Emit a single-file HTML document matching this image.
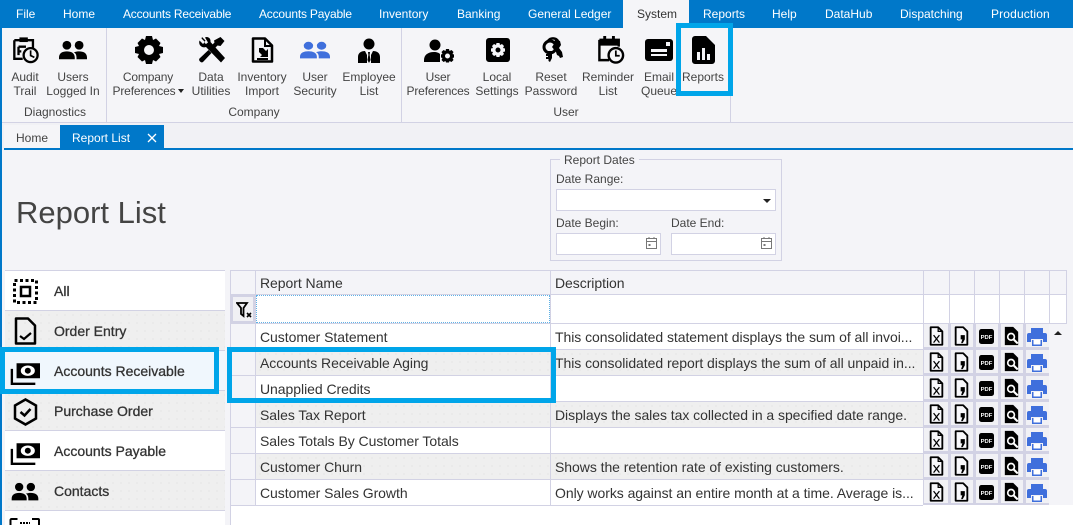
<!DOCTYPE html>
<html><head><meta charset="utf-8"><style>
html,body{margin:0;padding:0;width:1073px;height:525px;overflow:hidden;background:#f4f4f8;font:12px "Liberation Sans",sans-serif;color:#333}
.a,svg{position:absolute}
.a{white-space:nowrap}
.t{position:absolute;top:7px;color:#fff;line-height:14px;white-space:nowrap}
.r{position:absolute;text-align:center;line-height:14px;width:80px;color:#444;top:70px}
.g{position:absolute;text-align:center;width:100px;top:105px;line-height:14px;color:#444}
.b{position:absolute;background:#d2d2e4}
.si{position:absolute;left:5px;width:220px;height:39px;border-bottom:1px solid #d2d2e4}
.w{background:#fff}
.d{background-color:#efefef;background-image:radial-gradient(#dcdcdc .6px,transparent .8px);background-size:8px 8px}
.sl{position:absolute;left:54px;font-size:14px;line-height:18px;color:#333;-webkit-text-stroke:.3px #333;white-space:nowrap}
.row{position:absolute;left:256px;width:667px;height:25px;border-bottom:1px solid #d2d2e4}
.c{position:absolute;font-size:14px;line-height:18px;white-space:nowrap;color:#333;letter-spacing:-.05px}
.cy{position:absolute;border:5px solid #00a5e9;box-sizing:border-box}
.l{position:absolute;font-size:12px;line-height:14px;color:#444;white-space:nowrap}
.in{position:absolute;background:#fff;border:1px solid #d2d2e4;box-sizing:border-box}
</style></head><body>
<svg width="0" height="0" style="position:absolute">
<defs>
<symbol id="x" viewBox="0 0 18 24"><path d="M2 1.500h9l5 5v16H2z" fill="#f8f8fb" stroke="#000" stroke-width="2.200" stroke-linejoin="round"/><path d="M11 1.500v5h5" fill="none" stroke="#000" stroke-width="1.500"/><path d="M5.500 11l7 9M12.500 11l-7 9" stroke="#000" stroke-width="1.500"/></symbol>
<symbol id="w" viewBox="0 0 18 24"><path d="M2 1.500h9l5 5v16H2z" fill="#f8f8fb" stroke="#000" stroke-width="2.200" stroke-linejoin="round"/><path d="M8 11h5v5l-2.500 4.500h-2l1.500-4.500H8z" fill="#000"/></symbol>
<symbol id="p" viewBox="0 0 18 18"><rect width="18" height="18" y="0" rx="3" fill="#000"/><text x="9" y="12" font-size="7" font-weight="700" fill="#fff" text-anchor="middle" font-family="Liberation Sans">PDF</text></symbol>
<symbol id="q" viewBox="0 0 18 24"><path d="M1 1h10l6 6v16H1z" fill="#000"/><circle cx="8.500" cy="13" r="4" fill="#000" stroke="#fff" stroke-width="2"/><path d="M11.500 16l5 5" stroke="#fff" stroke-width="2.500"/></symbol>
<symbol id="pr" viewBox="0 0 20 20"><path d="M4 1h12v5H4z" fill="#3f6fdc"/><path d="M2 6h16a2 2 0 0 1 2 2v7h-4v-3H4v3H0V8a2 2 0 0 1 2-2z" fill="#3f6fdc"/><path d="M5 13h10v6H5z" fill="#3f6fdc"/><path d="M6.500 13h7v4.500h-7z" fill="#fff"/></symbol>
<symbol id="ppl" viewBox="0 0 32 24"><circle cx="9" cy="6" r="5"/><circle cx="23" cy="6" r="5"/><path d="M0 20c0-5 4-7 9-7s9 2 9 7v2H0zM20 13.300c1-.300 2-.300 3-.300 5 0 9 2 9 7v2H20v-2c0-3-1-5-3-6z"/></symbol>
<symbol id="mon" viewBox="0 0 32 24"><path d="M7 1h25v16H7z"/><ellipse cx="19" cy="9" rx="7.500" ry="5.500" fill="#fff"/><circle cx="19" cy="9" r="3.200"/><path d="M2 7v16h25" fill="none" stroke="#000" stroke-width="2.500"/></symbol>
</defs></svg>

<!-- top bar -->
<div class="a" style="left:0;top:0;width:1073px;height:28px;background:#0078c9"></div>
<div class="a" style="left:623px;top:0;width:66px;height:28px;background:#f5f5f8"></div>
<span class="t" style="left:16px">File</span><span class="t" style="left:63px">Home</span><span class="t" style="left:123px;letter-spacing:-.2px">Accounts Receivable</span><span class="t" style="left:259px;letter-spacing:-.2px">Accounts Payable</span><span class="t" style="left:379px">Inventory</span><span class="t" style="left:457px">Banking</span><span class="t" style="left:528px">General Ledger</span><span class="t" style="left:637px;color:#333">System</span><span class="t" style="left:703px">Reports</span><span class="t" style="left:772px">Help</span><span class="t" style="left:825px">DataHub</span><span class="t" style="left:900px">Dispatching</span><span class="t" style="left:991px;letter-spacing:.15px">Production</span>

<!-- ribbon -->
<div class="a" style="left:0;top:28px;width:2px;height:497px;background:#0078c9"></div>
<div class="a" style="left:2px;top:28px;width:1071px;height:94px;background:#f5f5f8"></div>
<div class="b" style="left:2px;top:122px;width:1071px;height:1px"></div>
<div class="b" style="left:106px;top:28px;width:1px;height:94px"></div>
<div class="b" style="left:401px;top:28px;width:1px;height:94px"></div>
<div class="b" style="left:730px;top:28px;width:1px;height:94px"></div>

<!-- ribbon icons -->
<svg style="left:12px;top:35px" width="27" height="29" viewBox="0 0 29 30"><path d="M2.500 5h20v10M2.500 5v20h9" fill="none" stroke="#000" stroke-width="2.500"/><path d="M8 2h9v5H8z" fill="#000"/><path d="M7 12h8M7 17h3M7 12v9" stroke="#000" stroke-width="2.500" fill="none"/><circle cx="20" cy="21" r="7.500" fill="#f5f5f8" stroke="#000" stroke-width="2.500"/><path d="M20 16v5.500l4 2" fill="none" stroke="#000" stroke-width="1.800"/></svg>
<svg style="left:58px;top:40px" width="30" height="21"><use href="#ppl" width="30" height="21"/></svg>
<svg style="left:135px;top:36px" width="28" height="28" viewBox="0 0 28 28"><path fill-rule="evenodd" d="M11 0h6l1 4 3-1.500 4.500 4.500L24 10l4 1v6l-4 1 1.500 3-4.500 4.500L18 24l-1 4h-6l-1-4-3 1.500L2.500 21 4 18l-4-1v-6l4-1-1.500-3L7 2.500 10 4zM14 9a5 5 0 1 0 0 10 5 5 0 0 0 0-10z"/></svg>
<svg style="left:198px;top:37px" width="27" height="26" viewBox="0 0 27 26"><path d="M4 0l3.500 3.500-1.500 2 2 1.500 2-1.500L7 .5c3-1.500 6 1 5.500 4.500L27 21l-4 4.500L8 10C4 11.500 0 8 1.500 3.500L5 7l2-2L3.500 1.500z"/><path d="M22.500 0l4 4-4 5-3-.5-4.500 4.500-3-3 4.500-4.500-.5-2z"/><path d="M10.500 13l3 3L5 25c-1.500 1.500-5-1.500-3.500-3.500z"/></svg>
<svg style="left:251px;top:37px" width="23" height="26" viewBox="0 0 23 26"><path d="M2 1.500h12l7 7v16H2z" fill="none" stroke="#000" stroke-width="2.500" stroke-linejoin="round"/><path d="M14 2v7h7" fill="none" stroke="#000" stroke-width="2"/><path d="M8 11h4l3 3 2-2v8H9l2-2-3-3zM6 21h11v2H6z" fill="#000"/></svg>
<svg style="left:300px;top:41px" width="30" height="19" fill="#3f6fdc" viewBox="0 0 32 24" preserveAspectRatio="none"><use href="#ppl" width="32" height="24"/></svg>
<svg style="left:358px;top:38px" width="22" height="25" viewBox="0 0 22 25"><circle cx="11" cy="6" r="5.500"/><path d="M0 25v-6c0-4 3-6 7-6l2 4v8zM22 25v-6c0-4-3-6-7-6l-2 4v8zM10 14h2l-.4 3 1 5-1.600 3-1.600-3 1-5z"/></svg>
<svg style="left:424px;top:39px" width="30" height="24" viewBox="0 0 30 24"><circle cx="11" cy="6" r="5.500"/><path d="M0 23v-2c0-5 4-8 10-8 3 0 5 1 6 2v8z"/><path fill-rule="evenodd" d="M22 10h3l.5 2 2-1 2 2-1 2 1.500.5v3l-1.500.5 1 2-2 2-2-1-.5 1.500h-3l-.5-1.500-2 1-2-2 1-2-1.500-.5v-3l1.500-.5-1-2 2-2 2 1zM23.500 14.500a2.500 2.500 0 1 0 0 5 2.500 2.500 0 0 0 0-5z"/></svg>
<svg style="left:486px;top:38px" width="24" height="24" viewBox="0 0 24 24"><path fill-rule="evenodd" d="M3 0h18a3 3 0 0 1 3 3v18a3 3 0 0 1-3 3H3a3 3 0 0 1-3-3V3a3 3 0 0 1 3-3zM10.500 5l-.5 2-2-1-2 2 1 2-2 .5v3l2 .5-1 2 2 2 2-1 .5 2h3l.5-2 2 1 2-2-1-2 2-.5v-3l-2-.5 1-2-2-2-2 1-.5-2zM12 9.500a2.500 2.500 0 1 1 0 5 2.500 2.500 0 0 1 0-5z"/></svg>
<svg style="left:541px;top:36px" width="22" height="27" viewBox="0 0 22 27"><circle cx="9" cy="11" r="6" fill="none" stroke="#000" stroke-width="3"/><path d="M7 5a6 6 0 0 1 10 0" fill="none" stroke="#000" stroke-width="2.500"/><path d="M7 15h4v7l-2 4-1.500-1V23H5v-2h2v-1H5v-2h2z"/><path d="M14 3l5 2 1 4-2 3 3 4 1 5-3 1-1-2-2-1-1-3-4-5 2-3z"/></svg>
<svg style="left:597px;top:35px" width="28" height="29" viewBox="0 0 28 30"><path d="M2 5h20v7M2 5v21h10" fill="none" stroke="#000" stroke-width="2.500"/><path d="M2 6h20v5H2zM6 1h3v5H6zM15 1h3v5h-3z"/><circle cx="19" cy="21" r="7.500" fill="#f5f5f8" stroke="#000" stroke-width="2.500"/><path d="M19 16v5.500h4" fill="none" stroke="#000" stroke-width="1.800"/></svg>
<svg style="left:645px;top:39px" width="28" height="22" viewBox="0 0 28 22"><rect width="28" height="22" rx="3"/><path d="M6 10h16v3H6zM6 15h16v2H6z" fill="#f5f5f8"/><path d="M21 3h4v4h-4z" fill="#f5f5f8"/></svg>
<svg style="left:692px;top:36px" width="23" height="28" viewBox="0 0 23 28"><path fill-rule="evenodd" d="M3 0h11l9 9v16a3 3 0 0 1-3 3H3a3 3 0 0 1-3-3V3a3 3 0 0 1 3-3zM5 16v8h3v-8zM10 12v12h3V12zM15 18v6h3v-6z"/></svg>

<!-- ribbon labels -->
<div class="r" style="left:-15px">Audit<br>Trail</div>
<div class="r" style="left:33px">Users<br>Logged In</div>
<div class="r" style="left:106px;width:84px;letter-spacing:-.15px">Company<br>Preferences<span style="display:inline-block;border:3.500px solid transparent;border-top:4px solid #222;border-bottom:0;margin-left:2px;vertical-align:2px"></span></div>
<div class="r" style="left:171px">Data<br>Utilities</div>
<div class="r" style="left:222px">Inventory<br>Import</div>
<div class="r" style="left:275px">User<br>Security</div>
<div class="r" style="left:329px">Employee<br>List</div>
<div class="r" style="left:398px;letter-spacing:-.15px">User<br>Preferences</div>
<div class="r" style="left:457px">Local<br>Settings</div>
<div class="r" style="left:511px">Reset<br>Password</div>
<div class="r" style="left:568px">Reminder<br>List</div>
<div class="r" style="left:619px">Email<br>Queue</div>
<div class="r" style="left:663px">Reports</div>
<div class="g" style="left:5px">Diagnostics</div><div class="g" style="left:204px">Company</div><div class="g" style="left:516px">User</div>
<div class="cy" style="left:676px;top:23px;width:57px;height:73px"></div>

<!-- doc tabs -->
<div class="a" style="left:2px;top:123px;width:1071px;height:25px;background:#f1f1f5"></div>
<div class="a" style="left:4px;top:125px;width:56px;height:23px;background:#f5f5f8"></div>
<div class="a" style="left:60px;top:125px;width:104px;height:23px;background:#0078c9"></div>
<div class="a" style="left:4px;top:148px;width:1069px;height:2px;background:#0078c9"></div>
<span class="l" style="left:16px;top:131px">Home</span>
<span class="l" style="left:72px;top:131px;color:#fff">Report List</span>
<svg style="left:147px;top:133px" width="10" height="10"><path d="M1 1l8 8M9 1l-8 8" stroke="#fff" stroke-width="1.300"/></svg>

<!-- heading -->
<div class="a" style="left:16px;top:194px;font-size:31px;line-height:38px;color:#444">Report List</div>

<!-- report dates -->
<div class="a" style="left:550px;top:159px;width:232px;height:102px;border:1px solid #d2d2e4;box-sizing:border-box"></div>
<span class="l" style="left:560px;top:153px;background:#f4f4f8;padding:0 4px">Report Dates</span>
<span class="l" style="left:556px;top:172px">Date Range:</span>
<div class="in" style="left:556px;top:189px;width:220px;height:22px"></div>
<div class="a" style="left:763px;top:199px;border:4px solid transparent;border-top:4px solid #222;border-bottom:0"></div>
<span class="l" style="left:556px;top:216px">Date Begin:</span>
<span class="l" style="left:671px;top:216px">Date End:</span>
<div class="in" style="left:556px;top:233px;width:105px;height:22px"></div>
<div class="in" style="left:671px;top:233px;width:105px;height:22px"></div>
<svg style="left:645px;top:236px" width="13" height="14"><path d="M1.500 2.500h10v10h-10zM1.500 5.500h10M4 1v2M9 1v2" fill="none" stroke="#777"/><path d="M3.500 8h2v2h-2z" fill="#777"/></svg>
<svg style="left:760px;top:236px" width="13" height="14"><path d="M1.500 2.500h10v10h-10zM1.500 5.500h10M4 1v2M9 1v2" fill="none" stroke="#777"/><path d="M3.500 8h2v2h-2z" fill="#777"/></svg>

<!-- sidebar -->
<div class="a" style="left:5px;top:270px;width:220px;height:255px;border-top:1px solid #d2d2e4;border-right:1px solid #d2d2e4;border-left:1px solid #d2d2e4;box-sizing:border-box"></div>
<div class="si w" style="top:271px"></div>
<div class="si d" style="top:311px"></div>
<div class="si w" style="top:351px;background:#f0f7fd"></div>
<div class="si d" style="top:391px"></div>
<div class="si w" style="top:431px"></div>
<div class="si d" style="top:471px"></div>
<div class="si w" style="top:511px;height:14px;border:0"></div>
<span class="sl" style="top:282px">All</span><span class="sl" style="top:322px">Order Entry</span><span class="sl" style="top:362px">Accounts Receivable</span><span class="sl" style="top:402px">Purchase Order</span><span class="sl" style="top:442px">Accounts Payable</span><span class="sl" style="top:482px">Contacts</span>
<svg style="left:13px;top:279px" width="25" height="25"><path d="M8 8h9v9H8z" fill="none" stroke="#000" stroke-width="2.500"/><path d="M1.500 1.500h22v22h-22z" fill="none" stroke="#000" stroke-width="3" stroke-dasharray="3 2.500"/></svg>
<svg style="left:14px;top:317px" width="23" height="28" viewBox="0 0 23 28"><path d="M2 1.500h12l7 7v18H2z" fill="none" stroke="#000" stroke-width="2.500" stroke-linejoin="round"/><path d="M6 19l4 3 7-6" fill="none" stroke="#000" stroke-width="2.200"/></svg>
<svg style="left:10px;top:362px" width="30" height="23"><use href="#mon" width="30" height="23"/></svg>
<svg style="left:13px;top:398px" width="25" height="28" viewBox="0 0 25 28"><path d="M12.500 1.500l10.500 6v13l-10.500 6L2 20.500v-13z" fill="none" stroke="#000" stroke-width="2.500"/><path d="M7.500 14l4 3.500 6-6.500" fill="none" stroke="#000" stroke-width="2.500"/></svg>
<svg style="left:10px;top:442px" width="30" height="23"><use href="#mon" width="30" height="23"/></svg>
<svg style="left:10px;top:482px" width="30" height="20"><use href="#ppl" width="30" height="20"/></svg>
<svg style="left:9px;top:518px" width="32" height="7"><path d="M1.500 7V2a1 1 0 0 1 1-1h6M23 1h6a1 1 0 0 1 1 1v5" fill="none" stroke="#000" stroke-width="2"/><path d="M11 5h10" stroke="#000" stroke-width="2" stroke-dasharray="2 1"/></svg>
<div class="cy" style="left:0;top:347px;width:219px;height:47px"></div>

<!-- grid -->
<div class="a" style="left:230px;top:271px;width:836px;height:254px;background:#f4f4f8;border-left:1px solid #d2d2e4;box-sizing:border-box"></div>
<div class="a" style="left:230px;top:505px;width:843px;height:20px;background:#fff;border-left:1px solid #d2d2e4;box-sizing:border-box"></div>
<div class="b" style="left:230px;top:270px;width:837px;height:1px"></div>
<div class="b" style="left:230px;top:294px;width:837px;height:1px"></div>
<div class="b" style="left:230px;top:323px;width:837px;height:1px"></div>
<div class="a" style="left:256px;top:295px;width:810px;height:28px;background:#fff"></div>
<div class="b" style="left:255px;top:271px;width:1px;height:234px"></div>
<div class="b" style="left:550px;top:271px;width:1px;height:234px"></div>
<div class="b" style="left:923px;top:271px;width:1px;height:234px"></div>
<div class="b" style="left:949px;top:271px;width:1px;height:52px"></div>
<div class="b" style="left:974px;top:271px;width:1px;height:52px"></div>
<div class="b" style="left:999px;top:271px;width:1px;height:52px"></div>
<div class="b" style="left:1024px;top:271px;width:1px;height:52px"></div>
<div class="b" style="left:1049px;top:271px;width:1px;height:52px"></div>
<div class="b" style="left:1066px;top:271px;width:1px;height:52px"></div>
<div class="a" style="left:256px;top:295px;width:294px;height:28px;border:1px dotted #5fb2e6;box-sizing:border-box"></div>
<span class="c" style="left:260px;top:274px">Report Name</span><span class="c" style="left:555px;top:274px">Description</span>
<div class="a" style="left:231px;top:295px;width:24px;height:28px;background:#f0f0f4;border:2px solid #d2d2e4;box-sizing:border-box"></div>
<svg style="left:236px;top:302px" width="17" height="16" viewBox="0 0 17 16"><path d="M1 1h10L7.500 6v8L5 12V6z" fill="none" stroke="#000" stroke-width="1.800"/><path d="M11 11l4 4M15 11l-4 4" stroke="#000" stroke-width="1.600"/></svg>

<div class="row w" style="top:324px"></div><div class="row d" style="top:350px"></div><div class="row w" style="top:376px"></div><div class="row d" style="top:402px"></div><div class="row w" style="top:428px"></div><div class="row d" style="top:454px"></div><div class="row w" style="top:480px"></div>
<div class="b" style="left:231px;top:375px;width:25px;height:1px"></div><div class="b" style="left:231px;top:349px;width:25px;height:1px"></div><div class="b" style="left:231px;top:401px;width:25px;height:1px"></div><div class="b" style="left:231px;top:427px;width:25px;height:1px"></div><div class="b" style="left:231px;top:453px;width:25px;height:1px"></div><div class="b" style="left:231px;top:479px;width:25px;height:1px"></div><div class="b" style="left:231px;top:505px;width:25px;height:1px"></div>
<div class="b" style="left:255px;top:324px;width:1px;height:181px"></div><div class="b" style="left:550px;top:324px;width:1px;height:181px"></div>

<span class="c" style="left:260px;top:328px">Customer Statement</span><span class="c" style="left:555px;top:328px">This consolidated statement displays the sum of all invoi...</span>
<span class="c" style="left:260px;top:354px">Accounts Receivable Aging</span><span class="c" style="left:555px;top:354px">This consolidated report displays the sum of all unpaid in...</span>
<span class="c" style="left:260px;top:380px">Unapplied Credits</span>
<span class="c" style="left:260px;top:406px">Sales Tax Report</span><span class="c" style="left:555px;top:406px">Displays the sales tax collected in a specified date range.</span>
<span class="c" style="left:260px;top:432px">Sales Totals By Customer Totals</span>
<span class="c" style="left:260px;top:458px">Customer Churn</span><span class="c" style="left:555px;top:458px">Shows the retention rate of existing customers.</span>
<span class="c" style="left:260px;top:484px">Customer Sales Growth</span><span class="c" style="left:555px;top:484px">Only works against an entire month at a time. Average is...</span>

<!-- action cells -->
<div class="a" style="left:924px;top:324px;width:125px;height:181px;background-color:#d2d2e4;background-image:repeating-linear-gradient(to bottom,#f1f1f5 0,#f1f1f5 23px,transparent 23px,transparent 26px)"></div>
<div class="a" style="left:948px;top:324px;width:3px;height:181px;background:#d2d2e4"></div><div class="a" style="left:973px;top:324px;width:3px;height:181px;background:#d2d2e4"></div><div class="a" style="left:998px;top:324px;width:3px;height:181px;background:#d2d2e4"></div><div class="a" style="left:1023px;top:324px;width:3px;height:181px;background:#d2d2e4"></div>

<svg style="left:929px;top:326px" width="15" height="20"><use href="#x" width="15" height="20"/></svg><svg style="left:954px;top:326px" width="15" height="20"><use href="#w" width="15" height="20"/></svg><svg style="left:979px;top:329px" width="15" height="15"><use href="#p" width="15" height="15"/></svg><svg style="left:1004px;top:326px" width="15" height="20"><use href="#q" width="15" height="20"/></svg><svg style="left:1027px;top:327px" width="20" height="20"><use href="#pr"/></svg>
<svg style="left:929px;top:352px" width="15" height="20"><use href="#x" width="15" height="20"/></svg><svg style="left:954px;top:352px" width="15" height="20"><use href="#w" width="15" height="20"/></svg><svg style="left:979px;top:355px" width="15" height="15"><use href="#p" width="15" height="15"/></svg><svg style="left:1004px;top:352px" width="15" height="20"><use href="#q" width="15" height="20"/></svg><svg style="left:1027px;top:353px" width="20" height="20"><use href="#pr"/></svg>
<svg style="left:929px;top:378px" width="15" height="20"><use href="#x" width="15" height="20"/></svg><svg style="left:954px;top:378px" width="15" height="20"><use href="#w" width="15" height="20"/></svg><svg style="left:979px;top:381px" width="15" height="15"><use href="#p" width="15" height="15"/></svg><svg style="left:1004px;top:378px" width="15" height="20"><use href="#q" width="15" height="20"/></svg><svg style="left:1027px;top:379px" width="20" height="20"><use href="#pr"/></svg>
<svg style="left:929px;top:404px" width="15" height="20"><use href="#x" width="15" height="20"/></svg><svg style="left:954px;top:404px" width="15" height="20"><use href="#w" width="15" height="20"/></svg><svg style="left:979px;top:407px" width="15" height="15"><use href="#p" width="15" height="15"/></svg><svg style="left:1004px;top:404px" width="15" height="20"><use href="#q" width="15" height="20"/></svg><svg style="left:1027px;top:405px" width="20" height="20"><use href="#pr"/></svg>
<svg style="left:929px;top:430px" width="15" height="20"><use href="#x" width="15" height="20"/></svg><svg style="left:954px;top:430px" width="15" height="20"><use href="#w" width="15" height="20"/></svg><svg style="left:979px;top:433px" width="15" height="15"><use href="#p" width="15" height="15"/></svg><svg style="left:1004px;top:430px" width="15" height="20"><use href="#q" width="15" height="20"/></svg><svg style="left:1027px;top:431px" width="20" height="20"><use href="#pr"/></svg>
<svg style="left:929px;top:456px" width="15" height="20"><use href="#x" width="15" height="20"/></svg><svg style="left:954px;top:456px" width="15" height="20"><use href="#w" width="15" height="20"/></svg><svg style="left:979px;top:459px" width="15" height="15"><use href="#p" width="15" height="15"/></svg><svg style="left:1004px;top:456px" width="15" height="20"><use href="#q" width="15" height="20"/></svg><svg style="left:1027px;top:457px" width="20" height="20"><use href="#pr"/></svg>
<svg style="left:929px;top:482px" width="15" height="20"><use href="#x" width="15" height="20"/></svg><svg style="left:954px;top:482px" width="15" height="20"><use href="#w" width="15" height="20"/></svg><svg style="left:979px;top:485px" width="15" height="15"><use href="#p" width="15" height="15"/></svg><svg style="left:1004px;top:482px" width="15" height="20"><use href="#q" width="15" height="20"/></svg><svg style="left:1027px;top:483px" width="20" height="20"><use href="#pr"/></svg>

<div class="a" style="left:1054px;top:331px;border:4px solid transparent;border-bottom:4px solid #222;border-top:0"></div>

<!-- highlight -->
<div class="cy" style="left:227px;top:347px;width:329px;height:56px"></div>
</body></html>
